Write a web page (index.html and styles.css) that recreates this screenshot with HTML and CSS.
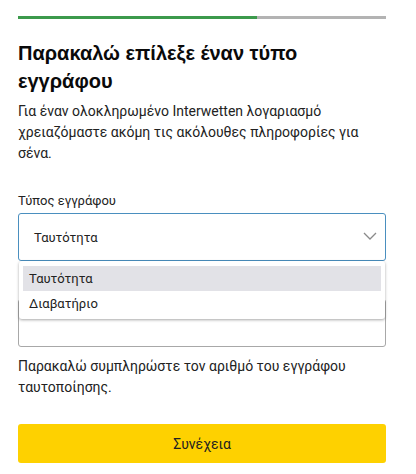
FILE: index.html
```html
<!DOCTYPE html>
<html lang="el">
<head>
<meta charset="utf-8">
<link rel="stylesheet" href="styles.css">
</head>
<body>
<main class="page">
  <div class="progress"><div class="progress-fill" style="width:65%"></div></div>
  <h1 class="title">Παρακαλώ επίλεξε έναν τύπο εγγράφου</h1>
  <p class="intro">Για έναν ολοκληρωμένο Interwetten λογαριασμό χρειαζόμαστε ακόμη τις ακόλουθες πληροφορίες για σένα.</p>

  <div class="field">
    <label class="label">Τύπος εγγράφου</label>
    <div class="select-wrap">
      <div class="select">
        <span>Ταυτότητα</span>
        <svg class="chev" width="14" height="8" viewBox="0 0 14 8"><path d="M1 1 L7 7 L13 1" fill="none" stroke="#8a8a8a" stroke-width="1.3"/></svg>
      </div>
      <ul class="menu">
        <li class="opt active">Ταυτότητα</li>
        <li class="opt">Διαβατήριο</li>
      </ul>
    </div>
  </div>

  <div class="field2">
    <div class="input"></div>
  </div>

  <p class="help">Παρακαλώ συμπληρώστε τον αριθμό του εγγράφου ταυτοποίησης.</p>

  <button class="btn">Συνέχεια</button>
</main>
</body>
</html>
```

FILE: styles.css
```css
* { box-sizing: border-box; }
html, body { margin: 0; padding: 0; background: #fff; }
body { font-family: Roboto, "Noto Sans", sans-serif; color: #222; }
.page { width: 368px; margin-left: 18px; padding-top: 16px; }
.progress { height: 3px; background: #b3b3b3; }
.progress-fill { height: 3px; background: #3c9a4c; }
.title {
  font-family: "Liberation Sans", Arial, sans-serif;
  font-weight: bold; font-size: 20px; line-height: 28px;
  margin: 20px 0 6px; color: #0a0a0a;
}
.intro { font-size: 14px; line-height: 21px; margin: 0; color: #222; }
.field { margin-top: 28px; }
.label { display: block; font-size: 13px; line-height: 18px; color: #222; margin-bottom: 3px; }
.select-wrap { position: relative; }
.select {
  height: 48px; border: 1px solid #4a8fbf; border-radius: 3px;
  display: flex; align-items: center; justify-content: space-between;
  padding: 0 8px 0 15px; font-size: 13px; color: #222;
}
.chev { margin-top: -2px; }
.menu {
  position: absolute; left: 1px; right: 1px; top: 48px; z-index: 5;
  list-style: none; margin: 0; padding: 5px 4px 3px;
  background: #fff; border-radius: 3px;
  box-shadow: 0 1px 3px rgba(0,0,0,0.35);
}
.opt { height: 25px; line-height: 25px; padding-left: 6px; font-size: 13px; color: #222; }
.opt.active { background: #e2e2e7; }
.field2 { margin-top: 38px; }
.input { height: 48px; border: 1px solid #a8a8a8; border-radius: 3px; }
.help { font-size: 14px; line-height: 21px; margin: 9px 0 0; color: #222; }
.btn {
  display: block; width: 100%; height: 39px; margin-top: 26px;
  background: #fed100; border: none; border-radius: 3px;
  font-family: Roboto, "Noto Sans", sans-serif; font-size: 14px; color: #222;
}
```
